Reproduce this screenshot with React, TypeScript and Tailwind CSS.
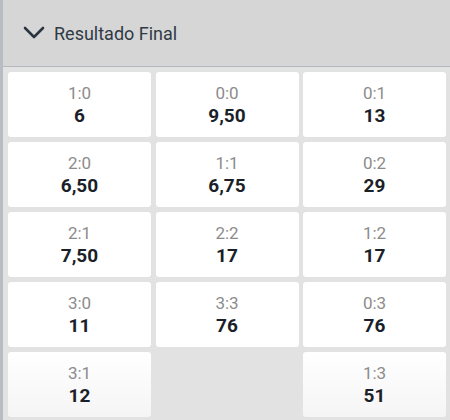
const odds = [
  ["1:0", "6"],
  ["0:0", "9,50"],
  ["0:1", "13"],
  ["2:0", "6,50"],
  ["1:1", "6,75"],
  ["0:2", "29"],
  ["2:1", "7,50"],
  ["2:2", "17"],
  ["1:2", "17"],
  ["3:0", "11"],
  ["3:3", "76"],
  ["0:3", "76"],
  ["3:1", "12"],
  null,
  ["1:3", "51"],
];

export default function App() {
  return (
    <div className="flex h-[420px] w-[450px] overflow-hidden bg-[#e2e2e2] font-['Roboto',sans-serif]">
      {/* left strip */}
      <div className="w-[3px] shrink-0 bg-[#b9bdc1]" />

      <div className="flex flex-1 flex-col">
        {/* header */}
        <div className="flex h-[67px] items-center gap-[9px] border-b border-[#b3b9bf] bg-[#d6d6d6] pl-[20px]">
          <svg width="22" height="14" viewBox="0 0 22 14" className="text-[#2b3540]">
            <polyline
              points="2,2 11,11 20,2"
              fill="none"
              stroke="currentColor"
              strokeWidth="2.6"
              strokeLinecap="round"
              strokeLinejoin="round"
            />
          </svg>
          <span className="text-[18px] text-[#2f3a45]">Resultado Final</span>
        </div>

        {/* grid */}
        <div className="grid grid-cols-3 gap-x-[4.5px] gap-y-[5px] pl-[5px] pr-[4px] pt-[5px]">
          {odds.map((o, i) =>
            o ? (
              <div
                key={i}
                className={`flex h-[65px] flex-col items-center justify-center rounded-[3px] ${
                  i >= 12 ? "bg-gradient-to-b from-white to-[#f5f5f5]" : "bg-white"
                }`}
              >
                <span className="text-[17px] leading-[22px] text-[#8c8c8c]">{o[0]}</span>
                <span className="text-[19px] font-bold leading-[23px] text-[#1b1f2a]">{o[1]}</span>
              </div>
            ) : (
              <div key={i} />
            )
          )}
        </div>
      </div>
    </div>
  );
}
